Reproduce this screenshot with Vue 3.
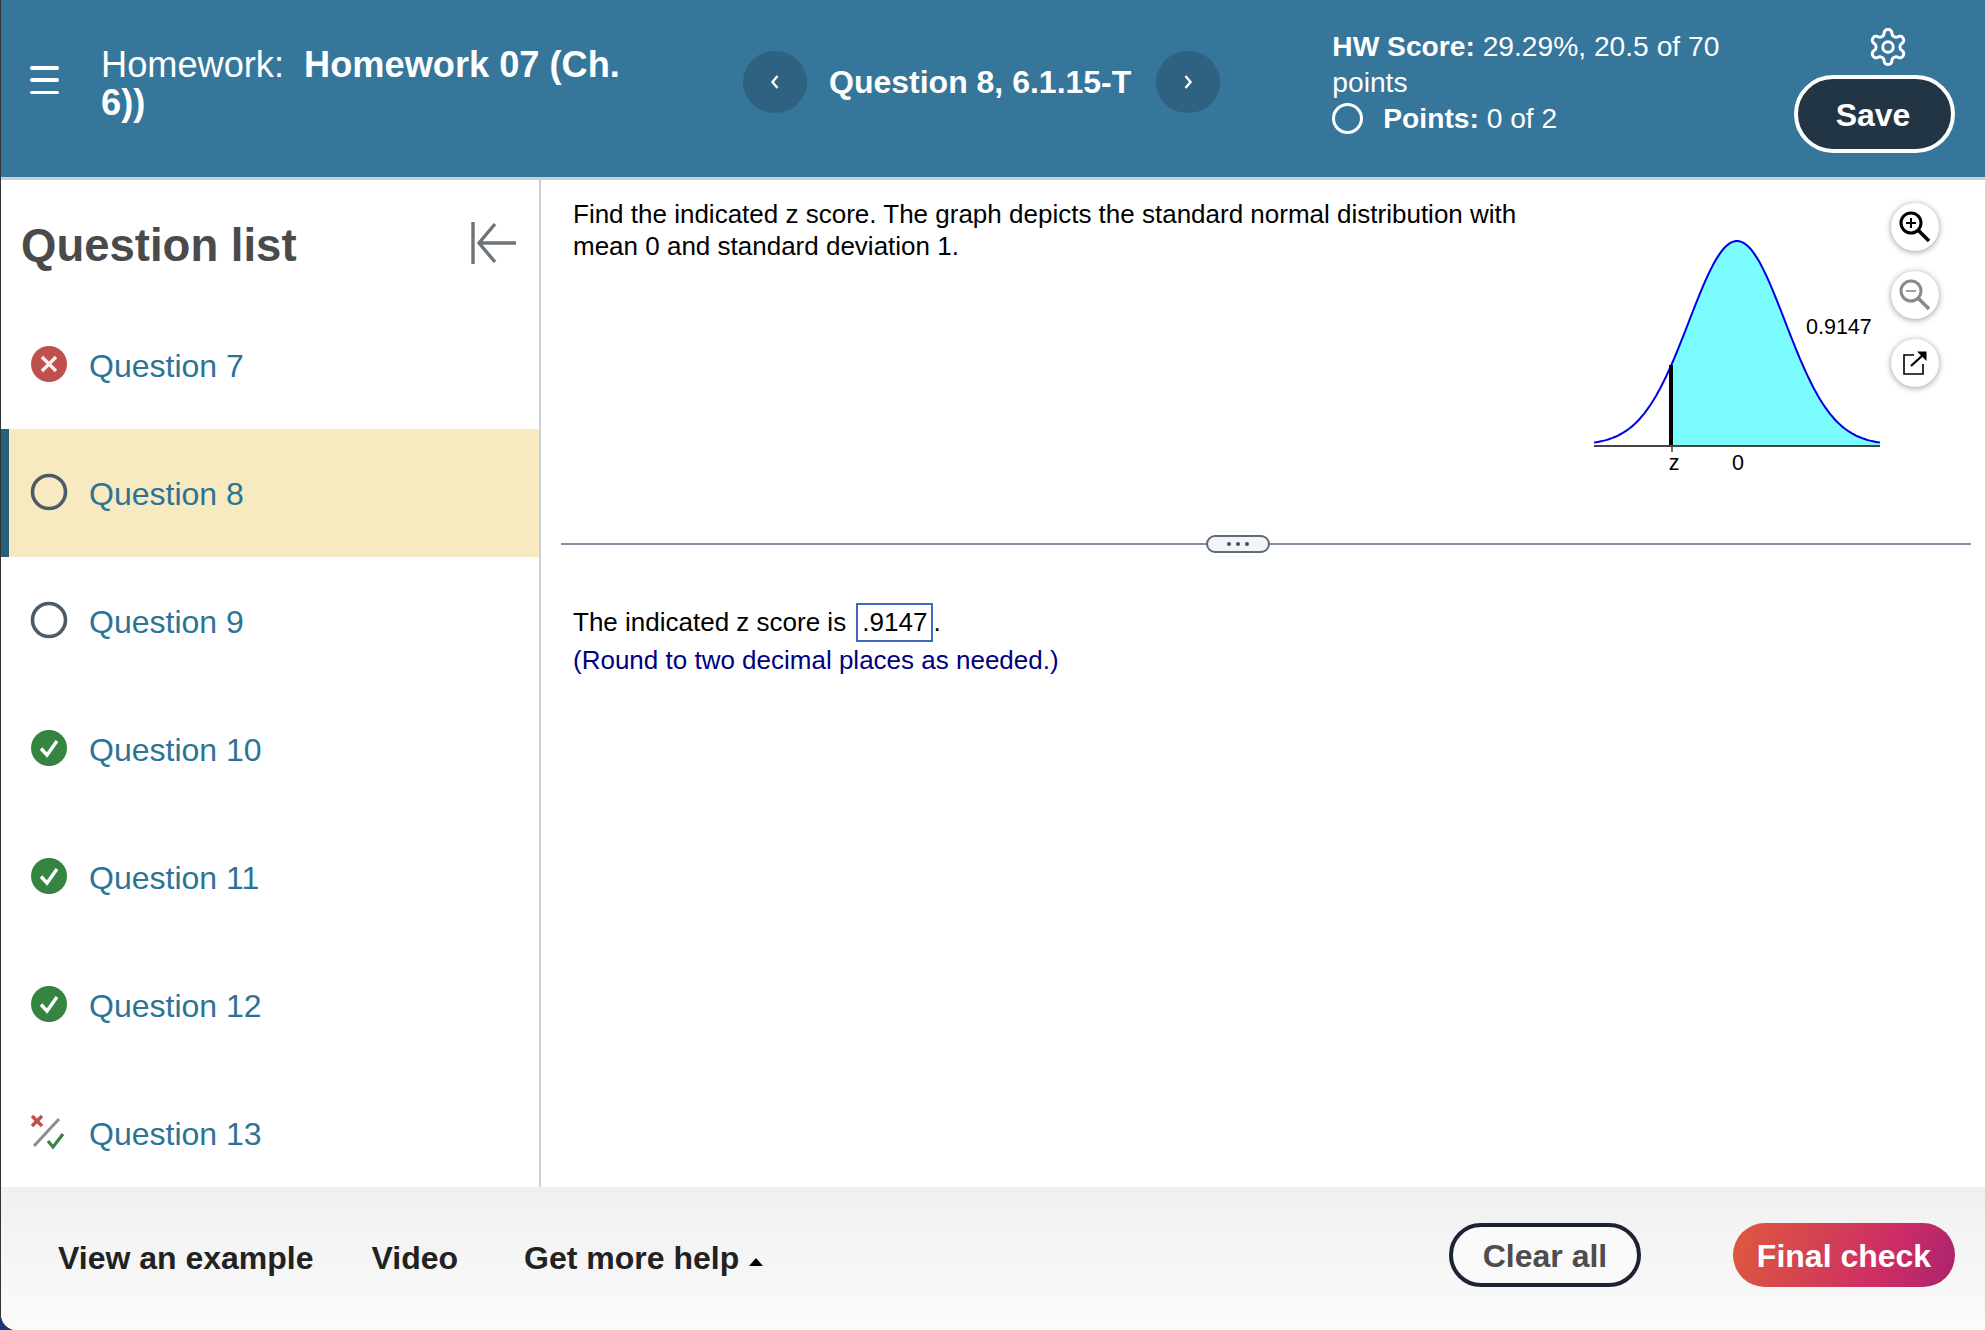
<script setup>
const questions = [
  { n: 7, s: 'wrong' },
  { n: 8, s: 'open', active: true },
  { n: 9, s: 'open' },
  { n: 10, s: 'ok' },
  { n: 11, s: 'ok' },
  { n: 12, s: 'ok' },
  { n: 13, s: 'partial' }
]
const pts = (a, b) => {
  const out = []
  for (let x = a; x <= b; x += 2) {
    const z = (x - 147) / 48
    out.push(`${x} ${(219 - 204 * Math.exp(-z * z / 2)).toFixed(1)}`)
  }
  return out
}
const curve = 'M' + pts(4, 290).join(' L')
const area = 'M81 219 L' + pts(81, 290).join(' L') + ' L290 219 Z'
</script>

<template>
  <div class="app">
    <header class="top">
      <button class="burger" aria-label="Menu"><i></i><i></i><i></i></button>
      <h1 class="hw">Homework:&nbsp; <b>Homework 07 (Ch. 6))</b></h1>
      <nav class="qnav">
        <button class="round" aria-label="Previous">
          <svg width="12" height="18" viewBox="0 0 12 18"><path d="M8.5 3 3.5 9l5 6" fill="none" stroke="#fff" stroke-width="2.4"/></svg>
        </button>
        <span class="qname">Question 8, 6.1.15-T</span>
        <button class="round" aria-label="Next">
          <svg width="12" height="18" viewBox="0 0 12 18"><path d="M3.5 3l5 6-5 6" fill="none" stroke="#fff" stroke-width="2.4"/></svg>
        </button>
      </nav>
      <div class="score">
        <div><b>HW Score:</b> 29.29%, 20.5 of 70 points</div>
        <div class="pts"><span class="ring"></span><span><b>Points:</b> 0 of 2</span></div>
      </div>
      <div class="actions">
        <svg class="gear" width="42" height="42" viewBox="0 0 24 24" fill="none" stroke="#fff" stroke-width="1.7" stroke-linejoin="round">
          <path d="M12.22 2h-.44a2 2 0 0 0-2 2v.18a2 2 0 0 1-1 1.73l-.43.25a2 2 0 0 1-2 0l-.15-.08a2 2 0 0 0-2.73.73l-.22.38a2 2 0 0 0 .73 2.73l.15.1a2 2 0 0 1 1 1.72v.51a2 2 0 0 1-1 1.74l-.15.09a2 2 0 0 0-.73 2.73l.22.38a2 2 0 0 0 2.73.73l.15-.08a2 2 0 0 1 2 0l.43.25a2 2 0 0 1 1 1.73V20a2 2 0 0 0 2 2h.44a2 2 0 0 0 2-2v-.18a2 2 0 0 1 1-1.73l.43-.25a2 2 0 0 1 2 0l.15.08a2 2 0 0 0 2.73-.73l.22-.39a2 2 0 0 0-.73-2.73l-.15-.08a2 2 0 0 1-1-1.74v-.5a2 2 0 0 1 1-1.74l.15-.09a2 2 0 0 0 .73-2.73l-.22-.38a2 2 0 0 0-2.73-.73l-.15.08a2 2 0 0 1-2 0l-.43-.25a2 2 0 0 1-1-1.73V4a2 2 0 0 0-2-2z"/>
          <circle cx="12" cy="12" r="3"/>
        </svg>
        <button class="save">Save</button>
      </div>
    </header>

    <div class="body">
      <aside class="side">
        <div class="side-head">
          <h2>Question list</h2>
          <svg class="collapse" width="48" height="44" viewBox="0 0 48 44" fill="none" stroke="#6f7478" stroke-width="3.4">
            <path d="M3 1v42M46 22H9M25 3 9 22l16 19"/>
          </svg>
        </div>
        <ul class="qlist">
          <li v-for="q in questions" :key="q.n" :class="{ active: q.active }">
            <svg class="st" width="38" height="38" viewBox="0 0 38 38">
              <template v-if="q.s === 'wrong'">
                <circle cx="19" cy="19" r="18" fill="#c0504d"/>
                <path d="M12 12l14 14M26 12 12 26" stroke="#fbeeee" stroke-width="3.4"/>
              </template>
              <circle v-else-if="q.s === 'open'" cx="19" cy="19" r="16.5" fill="none" stroke="#4d5b68" stroke-width="3.6"/>
              <template v-else-if="q.s === 'ok'">
                <circle cx="19" cy="19" r="18" fill="#35843f"/>
                <path d="M11 19.5l6 6.5 10-14" fill="none" stroke="#fff" stroke-width="3.4"/>
              </template>
              <template v-else>
                <path d="M2 3l10 10M12 3 2 13" stroke="#c0504d" stroke-width="3.4"/>
                <path d="M4 33 29 6" stroke="#8b8d8f" stroke-width="3"/>
                <path d="M18 28l5 6 10-13" fill="none" stroke="#35843f" stroke-width="3.2"/>
              </template>
            </svg>
            <a>Question {{ q.n }}</a>
          </li>
        </ul>
      </aside>

      <main class="main">
        <section class="problem">
          <p class="stem">Find the indicated z score. The graph depicts the standard normal distribution with mean 0 and standard deviation 1.</p>
          <svg class="graph" width="295" height="250" viewBox="0 0 295 250">
            <path :d="area" fill="#7bfcff"/>
            <path :d="curve" fill="none" stroke="#0000e6" stroke-width="2"/>
            <path d="M4 220h286" stroke="#444" stroke-width="2"/>
            <path d="M82 220v6" stroke="#444" stroke-width="1.5"/>
            <path d="M81 139v80" stroke="#000" stroke-width="4"/>
            <text x="84" y="244" text-anchor="middle">z</text>
            <text x="148" y="244" text-anchor="middle">0</text>
            <text x="216" y="108">0.9147</text>
          </svg>
          <div class="tools">
            <button aria-label="Zoom in">
              <svg width="34" height="34" viewBox="0 0 34 34" fill="none" stroke="#000">
                <circle cx="13" cy="13" r="10" stroke-width="3"/>
                <path d="M20.5 20.5 31 31" stroke-width="3.6"/>
                <path d="M8 13h10M13 8v10" stroke-width="2"/>
              </svg>
            </button>
            <button aria-label="Zoom out">
              <svg width="34" height="34" viewBox="0 0 34 34" fill="none" stroke="#8a8a8a">
                <circle cx="13" cy="13" r="10" stroke-width="3"/>
                <path d="M20.5 20.5 31 31" stroke-width="3.6"/>
                <path d="M8 13h10" stroke-width="1.6"/>
              </svg>
            </button>
            <button aria-label="Open in new window">
              <svg width="26" height="26" viewBox="0 0 26 26" fill="none" stroke="#000">
                <path d="M12 5H2v19h19V14" stroke-width="1.6"/>
                <path d="M9 16 22 4" stroke-width="2.2"/>
                <path d="M15 1.500h9.500V11z" fill="#000" stroke="none"/>
              </svg>
            </button>
          </div>
        </section>

        <div class="split"><span class="pill"><i></i><i></i><i></i></span></div>

        <section class="answer">
          <p>The indicated z score is <span class="box">.9147</span>.</p>
          <p class="hint">(Round to two decimal places as needed.)</p>
        </section>
      </main>
    </div>

    <footer class="foot">
      <a>View an example</a>
      <a class="video">Video</a>
      <a class="help">Get more help <span class="tri"></span></a>
      <button class="clear">Clear all</button>
      <button class="final">Final check</button>
    </footer>
  </div>
</template>

<style>
html, body { margin: 0; background: #17357a; }
</style>

<style scoped>
.app {
  width: 1985px; height: 1330px; display: flex; flex-direction: column;
  overflow: hidden; background: #fff; box-sizing: border-box;
  border-left: 1px solid #333; border-bottom-left-radius: 16px;
  font-family: "Liberation Sans", Arial, sans-serif; color: #000;
}
button { font-family: inherit; cursor: pointer; }
h1, h2, p, ul { margin: 0; padding: 0; font-weight: 400; }

.top {
  height: 177px; flex: none; display: flex; background: #36769a; color: #fff;
  border-bottom: 3px solid #c8d0dc; box-sizing: content-box; position: relative;
}
.burger {
  width: 29px; margin: 66px 0 0 29px; height: 28px; padding: 0; background: none; border: 0;
  display: flex; flex-direction: column; justify-content: space-between;
}
.burger i { display: block; height: 3.500px; border-radius: 2px; background: #fff; }
.hw { width: 560px; margin: 46px 0 0 42px; font-size: 36.2px; line-height: 38px; }
.qnav { display: flex; align-items: center; gap: 22px; margin: 51px 0 0 82px; height: 62px; }
.round {
  width: 64px; height: 62px; border-radius: 50%; border: 0; padding: 0; background: #2f6180;
  display: flex; align-items: center; justify-content: center;
}
.qname { font-size: 32px; font-weight: 700; white-space: nowrap; margin-right: 3px; }
.score { width: 410px; margin: 28px 0 0 112px; font-size: 28.2px; line-height: 36px; }
.pts { display: flex; align-items: center; gap: 20px; }
.ring { width: 25px; height: 25px; border: 3.500px solid #fff; border-radius: 50%; }
.actions {
  position: absolute; left: 1793px; top: 26px; width: 161px;
  display: flex; flex-direction: column; align-items: center;
}
.gear { margin-left: 26px; }
.save {
  margin-top: 7px; width: 161px; height: 78px; border-radius: 39px; border: 4px solid #fff;
  background: #213545; color: #fff; font-size: 32px; font-weight: 700; padding: 2px 3px 0 0;
}

.body { flex: 1; min-height: 0; display: flex; }
.side { width: 538px; flex: none; border-right: 2px solid #c8d0dc; overflow: hidden; }
.side-head {
  height: 121px; display: flex; align-items: center; justify-content: space-between;
  padding: 0 21px 0 20px;
}
.side-head h2 { font-size: 45.5px; font-weight: 700; color: #4a4a4a; margin-top: 10px; }
.collapse { margin-top: 5px; }
.qlist { list-style: none; }
.qlist li {
  height: 128px; display: flex; align-items: center; gap: 21px; padding: 2px 0 0 29px;
  box-sizing: border-box; font-size: 32px; color: #2d7396;
}
.qlist li.active { background: #f7eac0; border-left: 8px solid #27607c; padding-left: 21px; }
.st { flex: none; margin-top: -4px; }

.main { flex: 1; min-width: 0; }
.problem { height: 363px; display: flex; padding-left: 32px; font-size: 26px; line-height: 32px; }
.stem { width: 1017px; flex: none; padding-top: 18px; box-sizing: border-box; padding-right: 60px; }
.graph { margin: 46px 0 0 0; flex: none; }
.graph text { font-family: "Liberation Sans", Arial, sans-serif; font-size: 21.500px; fill: #000; }
.tools { display: flex; flex-direction: column; gap: 20px; margin: 23px 0 0 6px; }
.tools button {
  width: 48px; height: 48px; padding: 0; border: 0; border-radius: 50%; background: #fff;
  box-shadow: 0 1px 6px rgba(0, 0, 0, .4); display: flex; align-items: center; justify-content: center;
}
.split {
  height: 2px; margin: 0 14px 0 20px; background: #868fa0; position: relative;
}
.pill {
  position: absolute; left: 645px; top: -8px; width: 64px; height: 18px; box-sizing: border-box;
  border: 2px solid #5d6b7a; border-radius: 9px; background: #f2f4f7;
  display: flex; align-items: center; justify-content: center; gap: 5px;
}
.pill i { width: 4px; height: 4px; border-radius: 50%; background: #47525e; }
.answer { padding: 58px 0 0 32px; font-size: 26px; line-height: 38px; }
.box {
  display: inline-block; box-sizing: border-box; height: 39px; line-height: 35px; padding: 0 4px;
  border: 2px solid #3f69c0; margin-left: 3px; vertical-align: top;
}
.hint { color: #000080; margin-top: -1px; }

.foot {
  height: 143px; flex: none; display: flex; align-items: center; padding: 0 30px 0 57px;
  background: linear-gradient(#f0f0f0, #fbfbfb); font-size: 32px; font-weight: 700; color: #222;
}
.video { margin-left: 58px; }
.help { margin-left: 66px; display: flex; align-items: center; gap: 10px; }
.tri {
  width: 0; height: 0; margin-top: 6px; border: 7.500px solid transparent; border-top: 0;
  border-bottom: 8px solid #000;
}
.clear, .final {
  height: 64px; border-radius: 32px; font-size: 32px; font-weight: 700;
  margin-bottom: 7px; padding: 3px 0 0;
}
.clear {
  margin-left: auto; width: 192px; border: 4px solid #1c2333; background: #fafafa; color: #4d4d4d;
}
.final {
  margin-left: 92px; width: 222px; border: 0; color: #fff;
  background: linear-gradient(110deg, #de5a3c 0%, #cc2c66 70%, #a9246e 100%);
}
</style>
